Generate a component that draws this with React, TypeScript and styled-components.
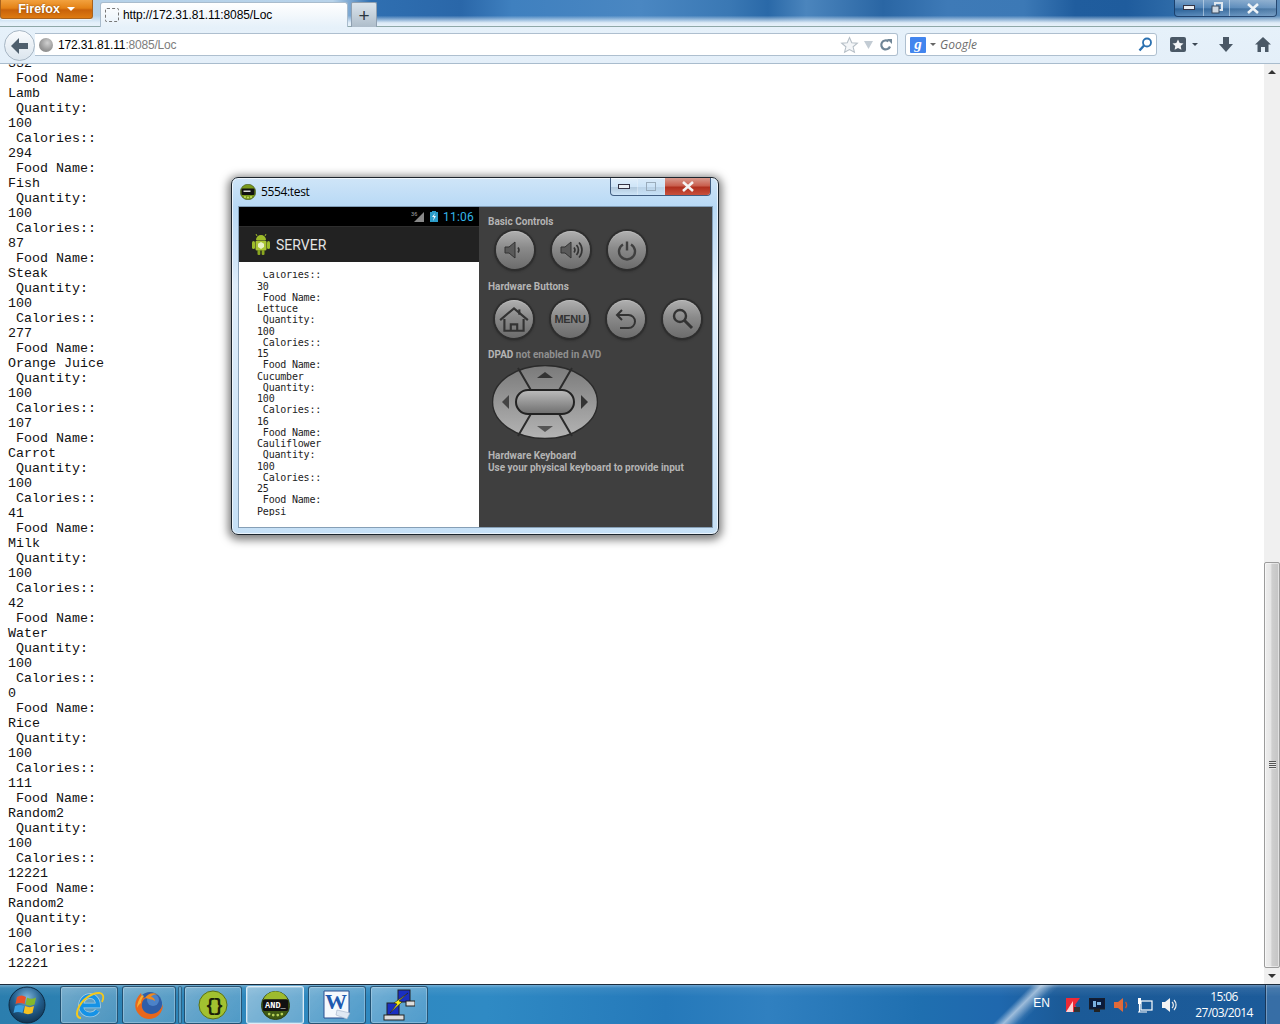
import React from "react";
import styled, { createGlobalStyle } from "styled-components";

const Global = createGlobalStyle`
  html, body { margin: 0; padding: 0; width: 1280px; height: 1024px; overflow: hidden; background: #fff; }
  * { box-sizing: border-box; }
`;
const Shell = styled.div`
  position: relative; width: 1280px; height: 1024px; display: flex; flex-direction: column;
  font-family: "Liberation Sans", Arial, sans-serif; overflow: hidden;
`;
const TitleBar = styled.header`
  position: relative; height: 27px; flex: none; display: flex; align-items: flex-start; padding-top: 2px;
  border-bottom: 1px solid #8fa8a8;
  background:
    linear-gradient(180deg, rgba(230,241,250,0) 0, rgba(230,241,250,0) 60%, rgba(230,241,250,.95) 88%, #e6f1fa 100%),
    linear-gradient(90deg, #b5d1e8 0, #b8d3ea 26%, #2f6fb1 29%, #2a67a9 36%, #3f80bf 40%, #4a87c2 50%, #3a78b4 57%, #2a69a8 60%, #4b85bd 63%, #2a66a4 69%, #3e7ab7 74%, #3c79b6 80%, #205d9e 84%, #1f5c9d 88%, #2f6ca9 92%, #5a8ab9 100%);
`;
const FirefoxButton = styled.div`
  position: absolute; left: 0; top: 0; width: 93px; height: 19px; border-radius: 0 0 3px 3px;
  display: flex; align-items: center; justify-content: center; gap: 7px;
  background: linear-gradient(180deg, #f2a13e 0, #e48216 45%, #c9620a 55%, #de7b12 100%);
  border: 1px solid #a8621e; border-top: 0; box-shadow: 0 1px 0 rgba(255,255,255,.6);
  color: #fff; font-size: 12.5px; font-weight: bold; text-shadow: 0 0 2px #7a4000;
`;
const Caret = styled.span<{ $c?: string; $s?: number; $ml?: number }>`
  display: inline-block; width: 0; height: 0; margin-left: ${(p) => p.$ml ?? 0}px;
  border-left: ${(p) => p.$s ?? 3}px solid transparent; border-right: ${(p) => p.$s ?? 3}px solid transparent;
  border-top: ${(p) => p.$s ?? 3}px solid ${(p) => p.$c ?? "#fff"};
`;
const Tab = styled.div`
  margin-left: 100px; width: 248px; height: 25px; display: flex; align-items: center; gap: 4px; padding-left: 4px;
  background: linear-gradient(180deg, #fff 0, #f3f8fc 50%, #e6f1fa 100%);
  border: 1px solid #a9bccd; border-bottom: 0; border-radius: 3px 3px 0 0;
  font-size: 12px; color: #000; position: relative; z-index: 1; letter-spacing: -.1px;
`;
const DashIcon = styled.span`
  width: 14px; height: 14px; border: 1px dashed #777; border-radius: 2px; flex: none;
`;
const NewTab = styled.div`
  margin-left: 3px; width: 26px; height: 25px; display: flex; align-items: center; justify-content: center;
  background: linear-gradient(180deg, #dbe4ec, #aebdca); border: 1px solid #8fa0b1; border-bottom: 0;
  border-radius: 2px 2px 0 0; color: #2c3640; font-size: 19px; line-height: 1;
`;
const WinControls = styled.div<{ $right: number; $h: number }>`
  position: absolute; right: ${(p) => p.$right}px; top: 0; height: ${(p) => p.$h}px; display: flex;
  border: 1px solid rgba(20,50,90,.75); border-top: 0; border-radius: 0 0 4px 4px; overflow: hidden;
`;
const WinBtn = styled.div<{ $w: number; $close?: boolean; $dim?: boolean }>`
  width: ${(p) => p.$w}px; height: 100%; display: flex; align-items: center; justify-content: center;
  border-right: 1px solid rgba(230,240,250,.5); color: #fff; opacity: ${(p) => (p.$dim ? 0.6 : 1)};
  background: ${(p) => p.$close
    ? "linear-gradient(180deg, #d99a8e 0, #c9604f 45%, #b0301f 55%, #c9503c 100%)"
    : "linear-gradient(180deg, rgba(255,255,255,.35) 0, rgba(255,255,255,.12) 50%, rgba(0,0,0,.1) 55%, rgba(255,255,255,.18) 100%)"};
  &:last-child { border-right: 0; }
`;
const NavBar = styled.nav`
  height: 37px; flex: none; display: flex; align-items: center; position: relative;
  background: linear-gradient(180deg, #e6f1fa 0, #e4eff9 100%); border-bottom: 1px solid #a9bccd;
  padding: 1px 0 2px 35px;
`;
const BackCircle = styled.div`
  position: absolute; left: 4px; top: 3px; width: 31px; height: 31px; border-radius: 50%;
  background: linear-gradient(180deg, #f9fbfd, #dbe5ee); border: 1px solid #a7b6c4;
  display: flex; align-items: center; justify-content: center; z-index: 1;
`;
const UrlBar = styled.div`
  width: 863px; height: 23px; background: #fff; border: 1px solid #aebfcf; border-left: 0; border-radius: 0 3px 3px 0;
  display: flex; align-items: center; padding: 0 4px 0 4px; font-size: 12px; color: #000;
`;
const Globe = styled.span`
  width: 14px; height: 14px; border-radius: 50%; flex: none; margin-right: 5px;
  background: radial-gradient(circle at 60% 35%, #d0d0d0 0, #9a9a9a 55%, #7d7d7d 100%);
`;
const Host = styled.span`color: #000; letter-spacing: -0.15px;`;
const PathPart = styled.span`color: #7d7d7d; letter-spacing: -0.2px;`;
const Grow = styled.div`flex: 1;`;
const SearchBar = styled.div`
  width: 252px; height: 23px; margin-left: 7px; background: #fff; border: 1px solid #aebfcf; border-radius: 3px;
  display: flex; align-items: center; padding: 0 4px 0 4px; gap: 4px;
  font-size: 12px; font-style: italic; color: #6d6d6d;
  font-family: "Open Sans", "Liberation Sans", sans-serif;
`;
const GBadge = styled.span`
  width: 16px; height: 16px; background: #4285ee; border-radius: 1px; color: #fff; flex: none;
  display: flex; align-items: center; justify-content: center; font: bold italic 15px "Liberation Serif", serif;
`;
const ToolIcons = styled.div`
  display: flex; align-items: center; margin-left: 13px; width: 110px; gap: 3px;
`;
const ToolGlyph = styled.svg<{ $ml: number }>`margin-left: ${(p) => p.$ml}px; flex: none;`;
const Main = styled.main`flex: 1; min-height: 0; display: flex;`;
const Page = styled.pre`
  flex: 1; margin: 0; padding: 0 0 0 8px; overflow: hidden; background: #fff; color: #111;
  font: 13.33px/15px "Liberation Mono", "Courier New", monospace;
`;
const PageText = styled.div`margin-top: -8.5px; white-space: pre;`;
const Scrollbar = styled.aside`
  width: 16px; flex: none; display: flex; flex-direction: column; background: #f0f0f0;
`;
const ScrollArrow = styled.div`
  height: 16px; flex: none; display: flex; align-items: center; justify-content: center; background: #f0f0f0;
`;
const ArrowUp = styled.span`
  width: 0; height: 0; border-left: 4px solid transparent; border-right: 4px solid transparent; border-bottom: 4px solid #333;
`;
const ArrowDown = styled.span`
  width: 0; height: 0; border-left: 4px solid transparent; border-right: 4px solid transparent; border-top: 4px solid #333;
`;
const ScrollSpace = styled.div`height: 482px; flex: none;`;
const Thumb = styled.div`
  flex: 1; border: 1px solid #9c9c9c; border-radius: 2px; display: flex; align-items: center; justify-content: center;
  background: linear-gradient(90deg, #eeeeee 0, #e6e6e6 40%, #cfcfcf 50%, #c4c4c4 100%);
  box-shadow: inset 0 0 0 1px rgba(255,255,255,.5);
`;
const Grip = styled.span`
  width: 7px; height: 8px;
  background: repeating-linear-gradient(180deg, #555 0, #555 1px, #e8e8e8 1px, #e8e8e8 2px);
`;
const Taskbar = styled.footer`
  height: 40px; flex: none; display: flex; align-items: stretch; position: relative; padding-top: 1px; overflow: hidden;
  border-top: 1px solid #1c2c3c;
  background:
    linear-gradient(180deg, rgba(255,255,255,.32) 0, rgba(255,255,255,.08) 8%, rgba(255,255,255,0) 30%),
    linear-gradient(135deg, transparent 0, transparent 78.2%, rgba(210,225,240,.7) 79%, rgba(210,225,240,.1) 80%, transparent 80.4%),
    linear-gradient(90deg, #2b7eae 0, #2f88bd 20%, #2f8ac4 38%, #2579ba 52%, #3080c0 60%, #1f6fb0 72%, #1f68ae 78%, #1b5a97 83%, #1c5b9a 100%);
`;
const Start = styled.div`width: 56px; flex: none; display: flex; align-items: center; justify-content: center; padding: 0 2px 1px 0;`;
const TaskItem = styled.div<{ $w: number; $active?: boolean; $gap?: number }>`
  width: ${(p) => p.$w}px; height: 38px; margin-left: ${(p) => p.$gap ?? 4}px; flex: none;
  display: flex; align-items: center; justify-content: center; border-radius: 3px;
  border: 1px solid ${(p) => (p.$active ? "rgba(235,245,250,.85)" : "rgba(15,55,85,.75)")};
  background: linear-gradient(135deg,
    ${(p) => (p.$active ? "rgba(255,255,255,.45)" : "rgba(255,255,255,.34)")} 0,
    ${(p) => (p.$active ? "rgba(255,255,255,.36)" : "rgba(255,255,255,.25)")} 40%,
    ${(p) => (p.$active ? "rgba(255,255,255,.26)" : "rgba(255,255,255,.16)")} 100%);
  box-shadow: inset 0 0 0 1px rgba(255,255,255,.25);
`;
const TaskSep = styled.div`width: 4px; height: 38px; margin-left: 2px; flex: none; border: 1px solid rgba(15,55,85,.6); border-radius: 2px; background: rgba(255,255,255,.2);`;
const Tray = styled.div`
  position: absolute; right: 0; top: 0; bottom: 0; display: flex; align-items: center; color: #fff;
`;
const Lang = styled.span`font: 12px "Liberation Sans", sans-serif; margin-right: 15px; margin-top: -3px;`;
const TrayIcons = styled.div`display: flex; align-items: center; gap: 8px; margin-right: 8px; margin-top: 1px;`;
const Clock = styled.div`
  width: 78px; text-align: center; font: 12px/16px "Open Sans", "Liberation Sans", sans-serif; margin-right: 2px; margin-top: 1px; letter-spacing: -.6px;
`;
const ShowDesktop = styled.div`
  width: 15px; height: 100%; border-left: 1px solid rgba(15,40,70,.8); background: rgba(255,255,255,.12);
  box-shadow: inset 1px 0 0 rgba(255,255,255,.3);
`;

/* Emulator window: a window on a desktop */
const EmuWindow = styled.section`
  position: absolute; left: 231px; top: 177px; width: 488px; height: 358px; border-radius: 7px;
  border: 1px solid #1c242c; padding: 0 6px 7px 7px; display: flex; flex-direction: column; z-index: 3;
  background:
    linear-gradient(180deg, #cfe5f8 0, #b8d9f5 8%, #d2e6f8 24%, #e0eefb 30%, #c6e0f6 100%);
  box-shadow: 0 2px 9px 3px rgba(0,0,0,.5), inset 0 0 0 1px rgba(255,255,255,.65);
`;
const EmuTitle = styled.div`
  height: 29px; flex: none; display: flex; align-items: center; gap: 5px; padding: 0 0 2px 1px;
  font: 12px "Open Sans", "Liberation Sans", sans-serif; color: #000; letter-spacing: -.35px;
`;
const EmuBody = styled.div`
  width: 473px; height: 320px; display: flex; border: 0; outline: 1px solid rgba(90,115,140,.6); flex: none;
`;
const Phone = styled.div`width: 240px; flex: none; display: flex; flex-direction: column; background: #fff;`;
const StatusBar = styled.div`
  height: 19px; flex: none; background: #000; display: flex; align-items: center; justify-content: flex-end;
  padding-right: 5px; gap: 3px; color: #33b5e5; font: 12px Roboto, sans-serif; letter-spacing: .2px;
`;
const BatteryIcon = styled.svg`margin: 0 2px; flex: none;`;
const ActionBar = styled.div`
  height: 36px; flex: none; background: #222; border-top: 1px solid #2e2e2e; display: flex; align-items: center;
  padding-left: 12px; gap: 5px; color: #e4e4e4; font: 14px Roboto, sans-serif;
`;
const PhoneScroll = styled.div`
  height: 244px; margin-top: 10px; padding-left: 18px; overflow: hidden; flex: none; background: #fff;
`;
const PhoneText = styled.pre`
  margin: -2.6px 0 0; color: #222; font: 10px/11.25px "DejaVu Sans Mono", monospace; letter-spacing: -.2px;
`;
const Skin = styled.div`
  flex: 1; background: #3f3f3f; padding: 9px 0 0 9px; display: flex; flex-direction: column;
  font: bold 10px/12px Roboto, "Liberation Sans", sans-serif; color: #b4b4b4;
`;
const SkinLabel = styled.div<{ $mt?: number }>`margin-top: ${(p) => p.$mt ?? 0}px; height: 12px;`;
const Dim = styled.span`color: #8f8f8f;`;
const Row = styled.div<{ $mt: number; $ml: number }>`
  display: flex; gap: 18px; margin-top: ${(p) => p.$mt}px; margin-left: ${(p) => p.$ml}px;
`;
const RoundBtn = styled.div`
  width: 38px; height: 38px; border-radius: 50%; display: flex; align-items: center; justify-content: center;
  background: linear-gradient(180deg, #b0b0b0 0, #8a8a8a 45%, #6c6c6c 100%);
  box-shadow: 0 0 0 2px #2e2e2e, 0 1px 2px 2px #333, inset 0 1px 0 rgba(255,255,255,.2);
  color: #333; font: bold 11px "Liberation Sans", sans-serif; letter-spacing: -.3px;
`;
const DpadSvg = styled.svg`display: block; margin: 4px 0 0 4px; flex: none;`;

const foods: [string, string][] = [
  ["Lamb", "294"], ["Fish", "87"], ["Steak", "277"], ["Orange Juice", "107"], ["Carrot", "41"], ["Milk", "42"],
  ["Water", "0"], ["Rice", "111"], ["Random2", "12221"], ["Random2", "12221"],
];
const pageText =
  "332\n" +
  foods.map(([n, c]) => ` Food Name:\n${n}\n Quantity:\n100\n Calories::\n${c}`).join("\n");
const phoneFoods: [string, string][] = [["Lettuce", "15"], ["Cucumber", "16"], ["Cauliflower", "25"]];
const phoneText =
  " Calories::\n30\n" +
  phoneFoods.map(([n, c]) => ` Food Name:\n${n}\n Quantity:\n100\n Calories::\n${c}`).join("\n") +
  "\n Food Name:\nPepsi";

const AndroidTerm = ({ s }: { s: number }) => (
  <svg width={s} height={s} viewBox="0 0 32 32">
    <circle cx="16" cy="16" r="15.5" fill="#3f5a14" stroke="#2c3e0e" />
    <path d="M2 11a14.500 14.500 0 0 1 28 0z" fill="#9dbb2e" />
    <rect x="2" y="9" width="28" height="13" rx="2" fill="#111" />
    <text x="4.500" y="19" fontFamily="Liberation Mono, monospace" fontWeight="bold" fontSize="9.5" fill="#fff">AND_</text>
    <g fill="#b8d25a">
      <circle cx="9" cy="25.5" r="1.5" /><circle cx="13.5" cy="26.5" r="1.5" />
      <circle cx="18.5" cy="26.5" r="1.5" /><circle cx="23" cy="25.5" r="1.5" />
    </g>
  </svg>
);
const SmallTerm = () => (
  <svg width="16" height="16" viewBox="0 0 32 32">
    <circle cx="16" cy="16" r="15.5" fill="#7a9a1c" stroke="#2a3a10" />
    <rect x="3" y="9" width="26" height="13" rx="2" fill="#111" />
    <rect x="7" y="13" width="14" height="3" fill="#ddd" />
    <g fill="#c4dc60"><circle cx="10" cy="26" r="2" /><circle cx="16" cy="27" r="2" /><circle cx="22" cy="26" r="2" /></g>
  </svg>
);
const Speaker = ({ loud }: { loud?: boolean }) => (
  <svg width="26" height="24" viewBox="0 0 26 24" fill="none">
    <path d="M3 9h4l6-5v16l-6-5H3z" fill="#5a5a5a" stroke="#333" />
    <path d="M16 9.500a4 4 0 0 1 0 5" stroke="#333" strokeWidth="1.6" />
    {loud && <path d="M18.500 7a7.500 7.500 0 0 1 0 10M21 4.500a11 11 0 0 1 0 15" stroke="#333" strokeWidth="1.7" />}
  </svg>
);

export default function App() {
  return (
    <Shell>
      <Global />
      <TitleBar>
        <FirefoxButton>Firefox <Caret $s={4} /></FirefoxButton>
        <Tab><DashIcon />http://172.31.81.11:8085/Loc</Tab>
        <NewTab>+</NewTab>
        <WinControls $right={3} $h={17}>
          <WinBtn $w={29}>
            <svg width="12" height="6"><rect x="0.500" y="0.500" width="11" height="4" fill="#e8eef4" stroke="#334" /></svg>
          </WinBtn>
          <WinBtn $w={26}>
            <svg width="12" height="12" fill="none" stroke="#dfe8f0" strokeWidth="2"><rect x="4" y="1" width="7" height="7" /><rect x="1" y="4" width="7" height="7" stroke="#39495c" strokeWidth="1" fill="#cfd9e3" /></svg>
          </WinBtn>
          <WinBtn $w={46}>
            <svg width="12" height="11"><path d="M1 1l10 9M11 1L1 10" stroke="#eef3f7" strokeWidth="2.600" /></svg>
          </WinBtn>
        </WinControls>
      </TitleBar>
      <NavBar>
        <BackCircle>
          <svg width="19" height="18" viewBox="0 0 19 18"><path d="M9 1L1 9l8 8v-5h9V6H9z" fill="#4f5f6d" /></svg>
        </BackCircle>
        <UrlBar>
          <Globe />
          <Host>172.31.81.11</Host><PathPart>:8085/Loc</PathPart>
          <Grow />
          <svg width="19" height="18" viewBox="0 0 24 24"><path d="M12 2l3 7 7.500.6-5.700 4.800 1.800 7.300L12 18l-6.600 3.700 1.800-7.300L1.500 9.600 9 9z" fill="#f4f6f8" stroke="#b5bec6" strokeWidth="1.400" /></svg>
          <svg width="20" height="10" viewBox="0 0 20 10"><path d="M5 1h9L9.500 9z" fill="#c3ccd4" /></svg>
          <svg width="14" height="14" viewBox="0 0 14 14" fill="none"><path d="M11 8.500A4.500 4.500 0 1 1 9.500 3.300" stroke="#6f8596" strokeWidth="2.200" /><path d="M8 1h5v5z" fill="#6f8596" /></svg>
        </UrlBar>
        <SearchBar>
          <GBadge>g</GBadge>
          <Caret $c="#666" />
          <span>Google</span>
          <Grow />
          <svg width="14" height="15" viewBox="0 0 14 15" fill="none"><circle cx="9" cy="5.500" r="4" stroke="#2a70b0" strokeWidth="1.800" /><path d="M6 8.500L1.500 13.500" stroke="#2a70b0" strokeWidth="2.400" /></svg>
        </SearchBar>
        <ToolIcons>
          <svg width="16" height="15" viewBox="0 0 16 15"><rect width="16" height="15" rx="2" fill="#4a5866" /><path d="M8 2.500l1.700 3.500 3.800.5-2.800 2.600.7 3.700L8 11l-3.400 1.800.7-3.700L2.500 6.500 6.300 6z" fill="#f4f6f8" /></svg>
          <Caret $c="#3c4854" $ml={3} />
          <ToolGlyph $ml={17} width="16" height="15" viewBox="0 0 16 15"><path d="M5 0h6v7h4l-7 8-7-8h4z" fill="#4a5866" /></ToolGlyph>
          <ToolGlyph $ml={18} width="16" height="15" viewBox="0 0 16 15"><path d="M8 0l8 7.500h-2.500V15h-3.500v-5H6v5H2.500V7.500H0z" fill="#4a5866" /></ToolGlyph>
        </ToolIcons>
      </NavBar>
      <Main>
        <Page><PageText>{pageText}</PageText></Page>
        <Scrollbar>
          <ScrollArrow><ArrowUp /></ScrollArrow>
          <ScrollSpace />
          <Thumb><Grip /></Thumb>
          <ScrollArrow><ArrowDown /></ScrollArrow>
        </Scrollbar>
      </Main>
      <Taskbar>
        <Start>
          <svg width="38" height="38" viewBox="0 0 38 38">
            <defs>
              <radialGradient id="orb" cx="50%" cy="30%" r="75%"><stop offset="0" stopColor="#7fb6dc" /><stop offset=".5" stopColor="#24608f" /><stop offset="1" stopColor="#0d2e4a" /></radialGradient>
            </defs>
            <circle cx="19" cy="19" r="18" fill="url(#orb)" stroke="#0d2a42" />
            <path d="M9 11c3-2 6-2 9 0l-1.500 7c-3-1.500-6-1.500-9 0z" fill="#e8502a" />
            <path d="M19 11.500c3 1.700 6 1.700 9 0l-1.500 7c-3 1.500-6 1.500-9 0z" fill="#84b82c" />
            <path d="M7 20c3-1.500 6-1.500 9 0l-1.500 7c-3-1.500-6-1.500-9 0z" fill="#3a9ee0" />
            <path d="M17 20c3 1.500 6 1.500 9 0l-1.500 7c-3 1.500-6 1.500-9 0z" fill="#f5c020" />
          </svg>
        </Start>
        <TaskItem $w={58}>
          <svg width="32" height="32" viewBox="0 0 32 32" fill="none">
            <path d="M9 16.500h16c0-6-3.500-9.500-8-9.500s-9 4-9 9.500 4 9 9 9c3.500 0 6-1.500 7.500-4" stroke="#e8f6fd" strokeWidth="5.500" opacity=".55" />
            <path d="M9 16.500h16c0-6-3.500-9.500-8-9.500s-9 4-9 9.500 4 9 9 9c3.500 0 6-1.500 7.500-4" stroke="#1592e6" strokeWidth="4" />
            <path d="M27 4C20 3 9 10 5 20c-2 5-1 9 3 9" stroke="#f4c81c" strokeWidth="2" />
            <path d="M27 4c4 1 4 5 2 9" stroke="#f4c81c" strokeWidth="1.800" />
          </svg>
        </TaskItem>
        <TaskItem $w={54}>
          <svg width="32" height="32" viewBox="0 0 32 32">
            <circle cx="17" cy="15" r="12" fill="#2f5ea8" />
            <circle cx="20" cy="11" r="6" fill="#4c82c8" />
            <path d="M8 4C3 9 1 15 3 21c3 7 11 11 18 8 6-2 9-8 9-14-2 6-6 10-12 10-6 0-10-5-9-10 0-3 2-5 4-6L9 8z" fill="#e8671c" />
            <path d="M12 9c3-5 9-6 13-3-3-1-6 0-7 2 2 0 4 2 4 4-3-2-7-2-10-3z" fill="#f08a1e" />
            <path d="M9 6c-3 4-5 8-5 13 1-2 2-4 4-5 0-3 1-5 3-7z" fill="#f7b032" />
          </svg>
        </TaskItem>
        <TaskSep />
        <TaskItem $w={58} $gap={2}>
          <svg width="30" height="30" viewBox="0 0 30 30">
            <circle cx="15" cy="15" r="14" fill="#a2c130" stroke="#5b7116" />
            <text x="15" y="21" textAnchor="middle" fontFamily="Liberation Mono, monospace" fontWeight="bold" fontSize="18" fill="#1c2008" letterSpacing="-3">{"{}"}</text>
          </svg>
        </TaskItem>
        <TaskItem $w={58} $active><AndroidTerm s={29} /></TaskItem>
        <TaskItem $w={58}>
          <svg width="30" height="30" viewBox="0 0 30 30">
            <path d="M2 1h25v23l-5 4H2z" fill="#f4f8fd" stroke="#2a4f90" />
            <path d="M15 20l13 3-3 6-11-4z" fill="#dfe8f3" stroke="#9fb0c8" strokeWidth=".6" />
            <text x="14" y="19" textAnchor="middle" fontFamily="Liberation Serif, serif" fontWeight="bold" fontSize="22" fill="#1e59b0">W</text>
          </svg>
        </TaskItem>
        <TaskItem $w={58}>
          <svg width="32" height="32" viewBox="0 0 32 32">
            <rect x="15" y="1" width="12" height="12" fill="#1a2fc0" stroke="#222" />
            <rect x="23" y="12" width="9" height="5" fill="#ddd" stroke="#222" />
            <rect x="4" y="14" width="12" height="12" fill="#1a2fc0" stroke="#222" />
            <rect x="1" y="26" width="20" height="5" fill="#ddd" stroke="#222" />
            <path d="M25 4L16 12l3 1L7 24l7-9-3-1z" fill="#f6ec16" stroke="#222" strokeWidth=".6" />
          </svg>
        </TaskItem>
        <Tray>
          <Lang>EN</Lang>
          <TrayIcons>
            <svg width="16" height="16" viewBox="0 0 16 16"><path d="M1 1h14l-5 7 5 7H1z" fill="#ee2a36" /><path d="M1 15L8 4v11z" fill="#fff" opacity=".8" /><rect x="9" y="10" width="6" height="5" fill="#333" /></svg>
            <svg width="16" height="15" viewBox="0 0 16 15"><rect width="16" height="11" fill="#0a1a3a" stroke="#222" /><path d="M4 3h3v6H4zm4 1h4v3H8z" fill="#7ab0e0" /><rect x="5" y="11" width="6" height="3" fill="#222" /></svg>
            <svg width="16" height="16" viewBox="0 0 16 16" fill="none"><path d="M1 5h4l5-4v14l-5-4H1z" fill="#e06a3a" /><path d="M12.500 5a5 5 0 0 1 0 6" stroke="#c9502a" strokeWidth="1.400" /></svg>
            <svg width="16" height="16" viewBox="0 0 16 16" fill="none"><rect x="4" y="4" width="11" height="9" stroke="#fff" strokeWidth="1.200" /><rect x="1" y="1" width="3" height="6" fill="#fff" /><path d="M2.500 7v8M1 15h9" stroke="#fff" strokeWidth="1.200" /></svg>
            <svg width="16" height="16" viewBox="0 0 16 16" fill="none"><path d="M1 5h3l5-4v14l-5-4H1z" fill="#f4f4f4" /><path d="M11 5a4 4 0 0 1 0 6M13 3a7 7 0 0 1 0 10" stroke="#eee" strokeWidth="1.200" /></svg>
          </TrayIcons>
          <Clock>15:06<br />27/03/2014</Clock>
          <ShowDesktop />
        </Tray>
      </Taskbar>

      <EmuWindow>
        <EmuTitle><SmallTerm />5554:test</EmuTitle>
        <WinControls $right={7} $h={18}>
          <WinBtn $w={27}>
            <svg width="12" height="6"><rect x="0.500" y="0.500" width="11" height="4" fill="#e8eef4" stroke="#334" /></svg>
          </WinBtn>
          <WinBtn $w={27} $dim>
            <svg width="11" height="10" fill="none"><rect x=".5" y=".5" width="9" height="8" stroke="#7a8894" /></svg>
          </WinBtn>
          <WinBtn $w={45} $close>
            <svg width="12" height="11"><path d="M1 1l10 9M11 1L1 10" stroke="#f4f4f4" strokeWidth="2.600" /></svg>
          </WinBtn>
        </WinControls>
        <EmuBody>
          <Phone>
            <StatusBar>
              <svg width="14" height="12" viewBox="0 0 14 12">
                <path d="M13 1v10H3z" fill="#888" />
                <text x="0" y="5" fontFamily="Liberation Sans, sans-serif" fontSize="5.500" fill="#aaa">36</text>
              </svg>
              <BatteryIcon width="8" height="11" viewBox="0 0 8 11"><path d="M2 0h4v1h2v10H0V1h2z" fill="#2b9cc9" /><path d="M5 2L2 6h2l-1 4 3-5H4z" fill="#eaf6fb" /></BatteryIcon>
              11:06
            </StatusBar>
            <ActionBar>
              <svg width="20" height="22" viewBox="0 0 20 22">
                <path d="M5 6a5 5 0 0 1 10 0z" fill="#9dbb2a" />
                <path d="M6 2L5 0M14 2l1-2" stroke="#9dbb2a" />
                <rect x="4.500" y="6.500" width="11" height="10" rx="1.500" fill="#a9c434" />
                <rect x="1" y="7" width="3" height="8" rx="1.500" fill="#9dbb2a" />
                <rect x="16" y="7" width="3" height="8" rx="1.500" fill="#9dbb2a" />
                <rect x="6.500" y="16" width="2.800" height="5" rx="1" fill="#8aa620" />
                <rect x="10.700" y="16" width="2.800" height="5" rx="1" fill="#8aa620" />
                <path d="M10 8l3 1.700v3.300L10 15l-3-2V9.700z" fill="#e8efc8" />
              </svg>
              SERVER
            </ActionBar>
            <PhoneScroll><PhoneText>{phoneText}</PhoneText></PhoneScroll>
          </Phone>
          <Skin>
            <SkinLabel>Basic Controls</SkinLabel>
            <Row $mt={3} $ml={8}>
              <RoundBtn><Speaker /></RoundBtn>
              <RoundBtn><Speaker loud /></RoundBtn>
              <RoundBtn>
                <svg width="22" height="22" viewBox="0 0 22 22" fill="none" stroke="#3f3f3f" strokeWidth="2.400"><path d="M7 5.500a8 8 0 1 0 8 0" /><path d="M11 2.500v9" /></svg>
              </RoundBtn>
            </Row>
            <SkinLabel $mt={12}>Hardware Buttons</SkinLabel>
            <Row $mt={7} $ml={7}>
              <RoundBtn>
                <svg width="32" height="28" viewBox="0 0 30 26" fill="none" stroke="#333" strokeWidth="2"><path d="M2 14L15 3l13 11" /><path d="M6 13v11h18V13" /><path d="M20 4v5" /><path d="M12 24v-6h6v6" /></svg>
              </RoundBtn>
              <RoundBtn>MENU</RoundBtn>
              <RoundBtn>
                <svg width="26" height="26" viewBox="0 0 26 26" fill="none" stroke="#333" strokeWidth="2"><path d="M9 4L4 9l5 5" /><path d="M4.500 9h11a6 6 0 0 1 0 13H7" /></svg>
              </RoundBtn>
              <RoundBtn>
                <svg width="26" height="26" viewBox="0 0 26 26" fill="none" stroke="#333"><circle cx="11" cy="10" r="6" strokeWidth="2.400" /><path d="M15.500 14.500L23 22" strokeWidth="3" /></svg>
              </RoundBtn>
            </Row>
            <SkinLabel $mt={11}>DPAD <Dim>not enabled in AVD</Dim></SkinLabel>
            <DpadSvg width="106" height="74" viewBox="0 0 106 74">
              <defs>
                <linearGradient id="dg" x1="0" y1="0" x2="0" y2="1"><stop offset="0" stopColor="#7a7a7a" /><stop offset="1" stopColor="#b4b4b4" /></linearGradient>
                <linearGradient id="dc" x1="0" y1="0" x2="0" y2="1"><stop offset="0" stopColor="#bdbdbd" /><stop offset="1" stopColor="#6e6e6e" /></linearGradient>
              </defs>
              <ellipse cx="53" cy="37" rx="52.500" ry="36.500" fill="url(#dg)" stroke="#2b2b2b" strokeWidth="1.500" />
              <path d="M26 3l14 24M80 3L66 27M26 71l14-24M80 71L66 47" stroke="#2b2b2b" strokeWidth="2" />
              <rect x="24" y="25" width="58" height="24" rx="12" fill="url(#dc)" stroke="#222" strokeWidth="2" />
              <path d="M53 7l8 6H45z" fill="#333" />
              <path d="M53 67l8-6H45z" fill="#555" />
              <path d="M10 37l7-7v14z" fill="#444" />
              <path d="M96 37l-7-7v14z" fill="#333" />
            </DpadSvg>
            <SkinLabel $mt={11}>Hardware Keyboard</SkinLabel>
            <SkinLabel>Use your physical keyboard to provide input</SkinLabel>
          </Skin>
        </EmuBody>
      </EmuWindow>
    </Shell>
  );
}
